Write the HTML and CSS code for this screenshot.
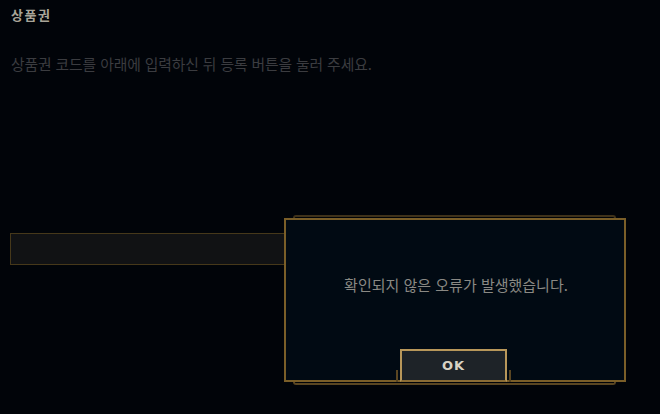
FILE: index.html
```html
<!DOCTYPE html>
<html lang="ko">
<head>
    <meta charset="UTF-8">
    <meta name="viewport" content="width=device-width, initial-scale=1.0">
    <title>상품권</title>
    <link rel="stylesheet" href="styles.css">
</head>
<body>
    <div class="page">
        <h1 class="title">상품권</h1>
        <p class="desc">상품권 코드를 아래에 입력하신 뒤 등록 버튼을 눌러 주세요.</p>
        <input class="code-input" type="text">
    </div>

    <div class="dialog">
        <div class="dialog-body">
            <p class="dialog-text">확인되지 않은 오류가 발생했습니다.</p>
        </div>
        <div class="dialog-foot">
            <button class="ok-btn">OK</button>
        </div>
    </div>
</body>
</html>
```

FILE: styles.css
```css
body {
    margin: 0;
    padding: 0;
    width: 660px;
    height: 414px;
    background: #010409;
    font-family: 'Noto Sans CJK KR', 'Noto Sans', sans-serif;
    overflow: hidden;
    position: relative;
}

.page {
    padding: 6px 10px;
    display: flex;
    flex-direction: column;
}

.title {
    margin: 0;
    font-size: 13px;
    font-weight: bold;
    letter-spacing: 1.5px;
    color: #a8a498;
    line-height: 18px;
    padding-left: 1px;
}

.desc {
    margin: 29px 0 0 1px;
    font-size: 14.8px;
    letter-spacing: -0.1px;
    line-height: 22px;
    color: #3b3c40;
}

.code-input {
    margin-top: 158px;
    width: 480px;
    height: 32px;
    box-sizing: border-box;
    background: #111214;
    border: 1px solid #46381a;
    outline: none;
}

/* dialog */
.dialog {
    position: absolute;
    left: 284px;
    top: 218px;
    width: 342px;
    height: 164px;
    box-sizing: border-box;
    border: 2px solid #7a5e28;
    background: #010a13;
    display: flex;
    flex-direction: column;
}

.dialog::before {
    content: '';
    position: absolute;
    left: 7px;
    right: 8px;
    top: -5px;
    height: 3px;
    border-top: 2px solid #3f321a;
    border-left: 2px solid #3f321a;
    border-right: 2px solid #3f321a;
    border-radius: 3px 3px 0 0;
    box-sizing: border-box;
}

.dialog::after {
    content: '';
    position: absolute;
    left: 7px;
    right: 8px;
    bottom: -5px;
    height: 3px;
    border-bottom: 2px solid #5a4622;
    border-left: 2px solid #5a4622;
    border-right: 2px solid #5a4622;
    border-radius: 0 0 3px 3px;
    box-sizing: border-box;
}

.dialog-body {
    flex: 1;
    display: flex;
    justify-content: center;
    padding-top: 54px;
    padding-left: 2px;
}

.dialog-text {
    margin: 0;
    font-size: 15px;
    line-height: 22px;
    color: #8a8984;
}

.dialog-foot {
    display: flex;
    justify-content: center;
    margin-bottom: -2px;
    padding-right: 3px;
}

.ok-btn {
    position: relative;
    width: 107px;
    height: 33px;
    background: #1e2328;
    border: 2px solid #b8975a;
    border-bottom-color: #8a6c34;
    color: #d8d2c2;
    font-family: 'DejaVu Sans', sans-serif;
    font-weight: bold;
    font-size: 13px;
    letter-spacing: 1px;
    padding: 0;
}

.ok-btn::before {
    content: '';
    position: absolute;
    left: -6px;
    right: -6px;
    bottom: -2px;
    height: 12px;
    border-left: 2px solid #5a4622;
    border-right: 2px solid #5a4622;
}
```
